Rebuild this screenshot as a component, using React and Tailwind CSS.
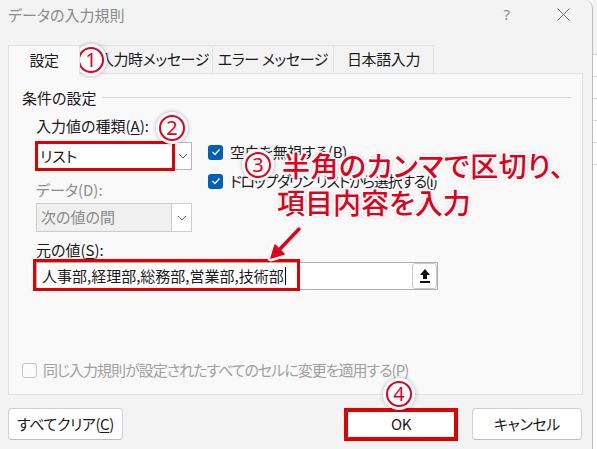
import React from "react";

const UI = { fontFamily: '"Noto Sans CJK JP", "Noto Sans", sans-serif', fontFeatureSettings: '"palt"' };

function Chevron({ color = "#5f5f5f" }) {
  return (
    <svg width="10" height="6" viewBox="0 0 10 6">
      <polyline points="1,1 5,5 9,1" fill="none" stroke={color} strokeWidth="1" />
    </svg>
  );
}

function Check() {
  return (
    <span className="w-[15px] h-[15px] rounded-[3px] bg-[#005fb8] flex items-center justify-center shrink-0">
      <svg width="10" height="8" viewBox="0 0 10 8">
        <polyline points="1.5,4 4,6.5 8.5,1.5" fill="none" stroke="#fff" strokeWidth="1.3" />
      </svg>
    </span>
  );
}

function Circled({ n, className = "" }) {
  return (
    <div
      className={
        "w-[26px] h-[26px] rounded-full border-2 border-[#e3001b] bg-white flex items-center justify-center text-[#e3001b] text-[20px] leading-none shadow-[0_0_0_3px_#ffffff,0_0_4px_3px_rgba(0,0,0,0.28)] " +
        className
      }
      style={{ fontFamily: '"Noto Sans", sans-serif' }}
    >
      <span className="-mt-[1px]">{n}</span>
    </div>
  );
}

const halo =
  "[text-shadow:2px_0_0_#fff,-2px_0_0_#fff,0_2px_0_#fff,0_-2px_0_#fff,1.5px_1.5px_0_#fff,-1.5px_-1.5px_0_#fff,1.5px_-1.5px_0_#fff,-1.5px_1.5px_0_#fff,0_0_4px_rgba(0,0,0,0.45)]";

export default function App() {
  return (
    <div className="w-[597px] h-[449px] flex bg-white overflow-hidden text-[15px] text-[#1a1a1a]" style={UI}>
      <div className="relative w-[593px] h-full shrink-0 bg-[#f3f3f3] rounded-tr-[8px] border-r border-[#bdbdbd] flex flex-col">
        {/* title bar */}
        <div className="h-[29px] flex items-center pl-[8px] pr-[22px] shrink-0">
          <span className="text-[#8a8a8a] leading-none">データの入力規則</span>
          <div className="flex-1" />
          <span className="text-[#8a8a8a] text-[15px] leading-none" style={{ fontFamily: '"Noto Sans", sans-serif' }}>?</span>
          <svg className="ml-[47px]" width="13" height="13" viewBox="0 0 13 13">
            <path d="M0.5 0.5 L12.5 12.5 M12.5 0.5 L0.5 12.5" stroke="#6b6b6b" strokeWidth="1" />
          </svg>
        </div>

        {/* tabs */}
        <div className="mt-[16px] ml-[8px] flex h-[28px] shrink-0 tracking-[-0.4px]">
          <div className="w-[72px] h-[29px] bg-[#f9f9f9] border border-b-0 border-[#e2e2e2] flex items-center justify-center relative z-10">設定</div>
          <div className="w-[133px] bg-[#f3f3f3] border-t border-r border-[#e2e2e2] flex items-center justify-center pl-[16px]">入力時メッセージ</div>
          <div className="w-[121px] bg-[#f3f3f3] border-t border-r border-[#e2e2e2] flex items-center justify-center">エラー メッセージ</div>
          <div className="w-[100px] bg-[#f3f3f3] border-t border-r border-[#e2e2e2] flex items-center justify-center">日本語入力</div>
        </div>

        {/* pane */}
        <div className="ml-[8px] w-[575px] h-[322px] shrink-0 bg-[#f9f9f9] border border-[#e2e2e2] flex flex-col">
          <div className="mt-[13px] pl-[13px] pr-[11px] h-[20px] flex items-center">
            <span className="leading-none">条件の設定</span>
            <div className="flex-1 h-px bg-[#d6d6d6] ml-[6px]" />
          </div>

          <div className="pl-[27px] flex flex-col">
            <div className="mt-[8px] h-[20px] flex items-center leading-none">
              入力値の種類(<span className="underline underline-offset-2">A</span>):
            </div>
            <div className="mt-[7px] flex">
              <div className="w-[156px] h-[28px] bg-white border border-[#b5b5b5] flex">
                <div className="flex-1 flex items-center pl-[3px]">リスト</div>
                <div className="w-[18px] border-l border-[#d0d0d0] flex items-center justify-center">
                  <Chevron />
                </div>
              </div>
              <div className="ml-[16px] flex flex-col gap-[9px]">
                <div className="h-[20px] flex items-center gap-[7px]">
                  <Check />
                  <span className="tracking-[-0.4px]">空白を無視する(B)</span>
                </div>
                <div className="h-[20px] flex items-center gap-[7px]">
                  <Check />
                  <span className="tracking-[-1.3px]">ドロップダウン リストから選択する(<span className="underline underline-offset-2">I</span>)</span>
                </div>
              </div>
            </div>

            <div className="-mt-[12px] h-[20px] flex items-center text-[#8c8c8c] leading-none">データ(D):</div>
            <div className="mt-[4px] w-[156px] h-[29px] bg-[#f0f0f0] border border-[#cccccc] flex text-[#8a8a8a]">
              <div className="flex-1 flex items-center pl-[4px]">次の値の間</div>
              <div className="w-[20px] bg-white border-l border-[#cccccc] flex items-center justify-center">
                <Chevron color="#6a6a6a" />
              </div>
            </div>

            <div className="mt-[7px] h-[20px] flex items-center leading-none">
              元の値(<span className="underline underline-offset-2">S</span>):
            </div>
            <div className="mt-[3px] w-[402px] h-[28px] bg-white border border-[#b0b0b0] flex items-center">
              <div className="flex-1 flex items-center pl-[5px]">
                <span>人事部,経理部,総務部,営業部,技術部</span>
                <span className="w-px h-[18px] bg-black ml-[1px]" />
              </div>
              <div className="w-[25px] h-[26px] bg-white border border-[#c8c8c8] rounded-[3px] flex items-center justify-center">
                <svg width="12" height="16" viewBox="0 0 12 16">
                  <path d="M6 1 L11 7 L8 7 L8 11 L4 11 L4 7 L1 7 Z" fill="#111" />
                  <rect x="1" y="13" width="10" height="2" fill="#111" />
                </svg>
              </div>
            </div>
          </div>

          <div className="flex-1" />
          <div className="mb-[14px] pl-[13px] h-[20px] flex items-center gap-[6px] text-[#a0a0a0]">
            <span className="w-[15px] h-[15px] rounded-[3px] border border-[#c4c4c4] bg-[#fbfbfb]" />
            <span className="tracking-[-1px]">同じ入力規則が設定されたすべてのセルに変更を適用する(P)</span>
          </div>
        </div>

        {/* buttons */}
        <div className="mt-[13px] px-[8px] flex tracking-[-0.4px]">
          <div className="w-[115px] h-[32px] bg-white border border-[#d0d0d0] border-b-[#bdbdbd] rounded-[4px] flex items-center justify-center">
            すべてクリア(<span className="underline underline-offset-2">C</span>)
          </div>
          <div className="ml-[223px] w-[110px] h-[32px] bg-white border border-[#d0d0d0] rounded-[4px] flex items-center justify-center">OK</div>
          <div className="ml-[16px] w-[110px] h-[32px] bg-white border border-[#d0d0d0] border-b-[#bdbdbd] rounded-[4px] flex items-center justify-center">キャンセル</div>
        </div>

        {/* annotations */}
        <div className="absolute left-[8px] top-[45px] w-[72px] h-[28px] border-[3px] border-[#e00000]" />
        <div className="absolute left-[35px] top-[141px] w-[140px] h-[30px] border-[3px] border-[#e00000]" />
        <div className="absolute left-[33px] top-[259px] w-[267px] h-[32px] border-[3px] border-[#e00000]" />
        <div className="absolute left-[344px] top-[408px] w-[114px] h-[33px] border-[4px] border-[#e00000]" />

        <Circled n="1" className="absolute left-[78px] top-[47px]" />
        <Circled n="2" className="absolute left-[159px] top-[115px]" />
        <Circled n="4" className="absolute left-[386px] top-[381px]" />

        <div
          className={"absolute left-[245px] top-[150px] flex items-center text-[28px] leading-[30px] font-medium text-[#e3001b] whitespace-nowrap " + halo}
          style={{ fontFamily: '"Noto Sans CJK JP", sans-serif' }}
        >
          <Circled n="3" className="mr-[11px] font-normal" />
          <span className="tracking-[0.5px]">半角のカンマで区切り、</span>
        </div>
        <div
          className={"absolute left-[277px] top-[187px] text-[28px] leading-[30px] font-medium text-[#e3001b] whitespace-nowrap " + halo}
          style={{ fontFamily: '"Noto Sans CJK JP", sans-serif' }}
        >
          項目内容を入力
        </div>

        <svg className="absolute left-[262px] top-[222px]" width="44" height="42" viewBox="0 0 44 42">
          <g stroke="#fff" strokeWidth="7" strokeLinejoin="round" strokeLinecap="round" fill="#fff">
            <line x1="37" y1="7" x2="18" y2="27" />
            <polygon points="9,36 22,32 13,23" />
          </g>
          <g stroke="#e3001b" strokeWidth="3.5" strokeLinejoin="round" fill="#e3001b">
            <line x1="37" y1="7" x2="18" y2="27" strokeLinecap="round" />
            <polygon points="9,36 22,32 13,23" strokeWidth="1.5" />
          </g>
        </svg>
      </div>
      <div className="flex-1 bg-white flex flex-col">
        <div className="h-[55px] bg-[#f3f3f3] border-b border-[#d0d0d0]" />
        <div className="h-[22px] border-b border-[#d4d4d4]" />
        <div className="h-[22px] border-b border-[#d4d4d4]" />
        <div className="h-[22px] border-b border-[#d4d4d4]" />
        <div className="h-[22px] border-b border-[#d4d4d4]" />
        <div className="h-[22px] border-b border-[#d4d4d4]" />
      </div>
    </div>
  );
}
